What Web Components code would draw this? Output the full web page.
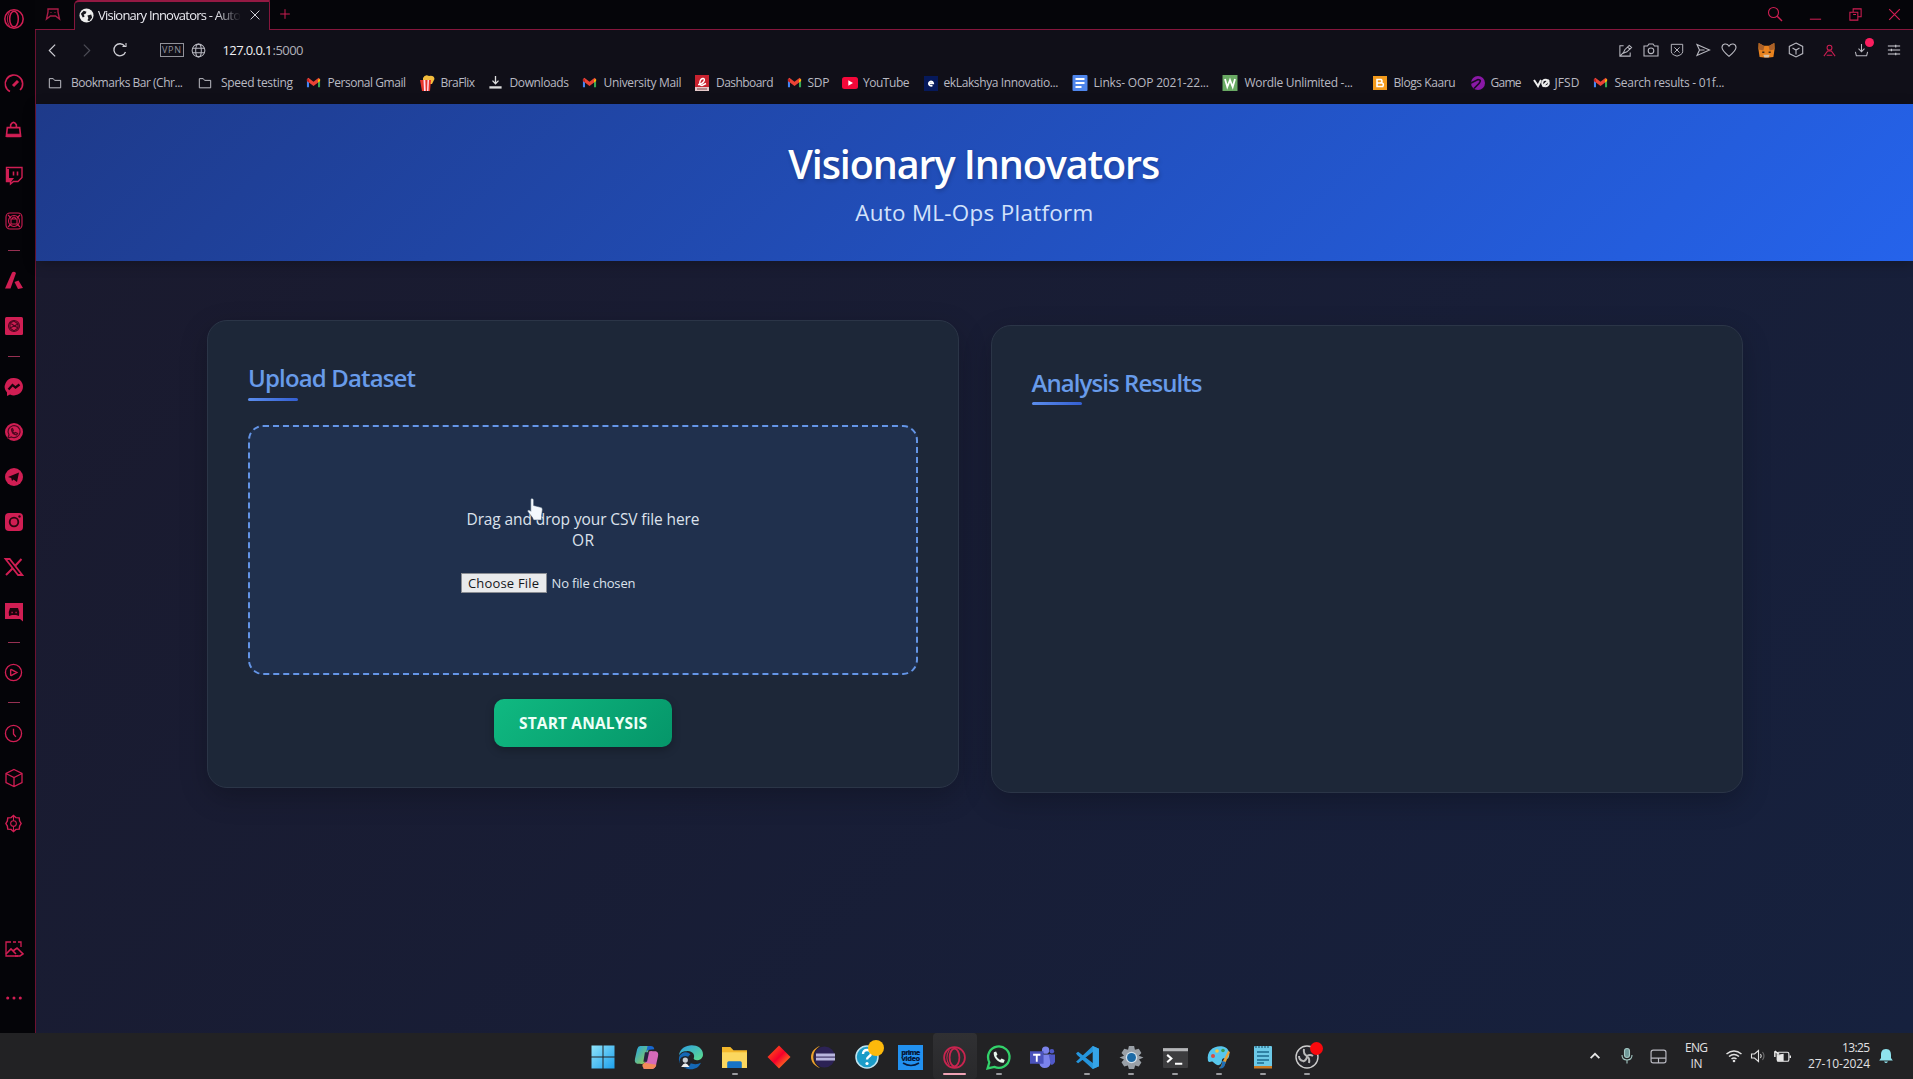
<!DOCTYPE html>
<html lang="en">
<head>
<meta charset="utf-8">
<title>Visionary Innovators - Auto ML-Ops</title>
<style>
html,body{margin:0;height:100%;overflow:hidden;background:#050509;font-family:"Open Sans","Noto Sans",sans-serif}
</style>
</head>
<body>
<desktop-screen></desktop-screen>
<script>
const R = '#d01e53';
const gmail = '<path d="M1 13V4.2l2.2-.4V13z" fill="#4285f4"/><path d="M12.800 13V3.800l2.200.4V13z" fill="#34a853"/><path d="M1 4.500l1.500-1.700L8 7.300l5.500-4.500L15 4.500v2L8 11.600 1 6.500z" fill="#ea4335"/><path d="M12.800 5v3l2.200-1.700V4.200z" fill="#fbbc04"/><path d="M1 4.200v2.200L3.200 8V4.800z" fill="#c5221f"/>';
// Each entry: [viewBox size, markup]. Stroke icons inherit currentColor.
const ICONS = {
  opera:[24,'<circle cx="12" cy="12" r="10" stroke-width="1.700"/><ellipse cx="12" cy="12" rx="4.700" ry="8.500" stroke-width="1.700"/><path d="M7 4.500Q2.500 12 7 19.500" stroke-width="1"/>'],
  pad:[16,'<path d="M3 3h10v3l1.500 7-4-3h-5l-4 3L3 6z" stroke-width="1.400"/><path d="M5.500 6.500h1M9.500 6.500h1"/>'],
  world:[16,'<circle cx="8" cy="8" r="7.500" fill="#eee" stroke="none"/><path d="M2 6l3-3 3 1-1 2-2 1 1 2-2 1zM9 8l4-1 1 3-3 4-2-1 1-2z" fill="#15151c" stroke="none"/>'],
  x:[16,'<path d="M3 3l10 10M13 3L3 13"/>'],
  plus:[16,'<path d="M8 2.500v11M2.500 8h11"/>'],
  back:[16,'<path d="M10.500 2.500L5 8l5.500 5.500"/>'],
  fwd:[16,'<path d="M5.500 2.500L11 8l-5.500 5.500"/>'],
  reload:[16,'<path d="M13.500 10A6 6 0 1 1 12.600 4" stroke-width="1.300"/><path d="M10.500 4.500h3.500V1"/>'],
  globe:[16,'<circle cx="8" cy="8" r="6.800"/><ellipse cx="8" cy="8" rx="3" ry="6.800"/><path d="M1.800 5.500h12.400M1.800 10.500h12.400"/>'],
  search:[16,'<circle cx="6.500" cy="6.500" r="5"/><path d="M10.200 10.200L15 15" stroke-width="1.500"/>'],
  min:[16,'<path d="M2 13h12"/>'],
  restore:[16,'<path d="M2 5.500h8.500V14H2z M5.500 5.500V2H14v8.500h-3.500"/><path d="M5.500 8h3"/>'],
  edit:[16,'<path d="M6 3H2v11h11v-4M5.500 11l1.800-3.800L12 2.500l2.500 2.300-5 4.600zM10 4l3 3M2 14l4-4"/>'],
  camera:[16,'<path d="M1 4h3.500L6 2h4l1.500 2H15v10H1z"/><circle cx="8" cy="8.800" r="2.800"/>'],
  shield:[16,'<path d="M1.500 1.500h13v8.500c0 2.500-3 4-6.500 5-3.500-1-6.500-2.500-6.500-5z M5 5l6 6M11 5l-6 6"/>'],
  send:[16,'<path d="M2 2.500L14.500 8 2 13.500 4.500 8zM4.500 8h5"/>'],
  heart:[16,'<path d="M8 14.300C4 11 1 8.500 1 5.500 1 1.500 6 .8 8 4.200 10 .8 15 1.500 15 5.500c0 3-3 5.500-7 8.800z"/>'],
  fox:[16,'<path d="M.5 1l5 2.500h5l5-2.500.2 5-1.200 8-4 .5h-5l-4-.5L.3 6z" fill="#e8821e" stroke="none"/><path d="M1 1l5 3-1 4-4-1zM15 1l-5 3 1 4 4-1z" fill="#a9602a" stroke="none"/><path d="M5 12h6l-1 2.500H6z" fill="#d8c2a8" stroke="none"/><path d="M4 9h2v1.300H4zM10 9h2v1.300h-2z" fill="#3a2413" stroke="none"/>'],
  cube:[20,'<path d="M10 1.500l8 4v9l-8 4-8-4v-9zM2 5.500l8 4 8-4M10 9.500v9" stroke-width="1.300"/>'],
  cubeIn:[16,'<path d="M8 1l6.700 3.400v7.200L8 15l-6.700-3.400V4.400z"/><path d="M4.500 6L8 8l3.500-2M8 8v4.500"/>'],
  person:[16,'<circle cx="8" cy="5" r="2.600"/><path d="M2 14l4-5.500h4l4 5.500M5 13h6"/>'],
  dl:[16,'<path d="M8 1v8M4.800 6L8 9.300 11.200 6M1.500 9.500l1 4h11l1-4"/>'],
  menu:[16,'<path d="M1 3.500h14M1 8h14M1 12.500h14M10 2v3M5 6.500v3M10 11v3" stroke-width="1.200"/>'],
  folder:[16,'<path d="M1.500 3h4.500l1.500 2h7v8.500h-13z"/>'],
  gmail:[16,'<g stroke="none">'+gmail+'</g>'],
  pop:[16,'<g stroke="none"><path d="M4 3q2-4 6-2 5-1 5.500 3L13 9H4z" fill="#f3bd3d"/><path d="M1 5h11l-1 11H3z" fill="#e63329"/><path d="M4.500 5h1.800l.4 11H5zM8.500 5h1.500l-.6 11H8z" fill="#fde"/></g>'],
  down:[16,'<path d="M8 1v8M4.800 6L8 9.300 11.200 6" stroke="#ddd" stroke-width="1.400"/><path d="M1.500 12h13v2.500h-13z" fill="#ddd" stroke="none"/>'],
  dash:[16,'<path d="M1 0h14v16H1z" fill="#c8222f" stroke="none"/><path d="M4 9.500c6-.5 8-6 5-6S4 10 8 10.500l4-2" stroke="#fff" stroke-width="1.400"/><path d="M1 12h14v4H1z" fill="#e5c9ca" stroke="none"/><path d="M3 14h10" stroke="#8b5157"/>'],
  yt:[16,'<rect y="2" width="16" height="12" rx="2.500" fill="#f5083a" stroke="none"/><path d="M6.300 5.300v5.400L11 8z" fill="#fff" stroke="none"/>'],
  ek:[16,'<rect x="1" y="1" width="14" height="15" fill="#06195b" stroke="none"/><path d="M5.800 8.300h4.400a2.200 2.200 0 1 0-.8 2" stroke="#fff" stroke-width="1.700"/>'],
  doc:[16,'<rect x=".5" width="15" height="16" rx="1" fill="#4f86ec" stroke="none"/><path d="M3.500 4h9M3.500 8h9M3.500 12h6" stroke="#fff" stroke-width="1.800"/>'],
  wordle:[16,'<rect x=".5" width="15" height="16" fill="#6aaa64" stroke="none"/><path d="M3 4l2.300 8L8 5l2.700 7L13 4" stroke="#fff" stroke-width="1.800"/>'],
  blog:[16,'<rect x="1" y="1" width="14" height="14" fill="#f39a1c" stroke="none"/><path d="M5 4.500h4q2 1.500 0 3.200 3.500.3 1.800 3.800H5zM5 8h4" stroke="#fff" stroke-width="1.600"/>'],
  game:[16,'<circle cx="8" cy="8" r="7" fill="#8a18a6" stroke="none"/><path d="M0 8.500l8-4q4 0 1 4l-5 5" stroke="#1b0c24" stroke-width="1.700"/>'],
  vo:[16,'<path d="M0 5l4 6 3-6M15 5L8.500 11.500" stroke="#eee" stroke-width="2"/><circle cx="11.500" cy="8" r="3.300" stroke="#eee" stroke-width="2"/>'],
  gauge:[20,'<path d="M6 17.500A8.700 8.700 0 1 1 16 16" stroke-width="1.600"/><path d="M9 12l5-5" stroke-width="3"/>'],
  bag:[20,'<path d="M3.500 8h13l1 9h-15zM7 8V5q3-5 6 0v3" stroke-width="1.700"/><path d="M3 15h14v2.500H3z" fill="currentColor"/>'],
  twitch:[20,'<path d="M2.500 2.500h15.500v10l-4 4H9.500l-3 2.500v-2.500h-4z" stroke-width="1.400"/><path d="M2 4h3v9h5l-3 4H2z" fill="currentColor" stroke="none"/><path d="M9.500 6.500v4M13.500 6.500v4" stroke-width="1.600"/>'],
  shop:[20,'<rect x="2" y="2" width="16" height="16" rx="4"/><circle cx="10" cy="10" r="5.500"/><path d="M7 13V8h6v5zM8 8q2-4 4 0M4 4l3 3M16 4l-3 3M4 16l3-3M16 16l-3-3"/>'],
  aria:[20,'<path d="M8 1.500q2-1.500 4 .5L6.500 17.500H1z" fill="currentColor" stroke="none"/><path d="M10.500 11l4-1.500L19 17l-5 1z" fill="currentColor" stroke="none"/>'],
  gpt:[20,'<rect x="1" y="1" width="18" height="18" rx="1.500" fill="currentColor" stroke="none"/><g stroke="#4d0720" stroke-width="1.100"><circle cx="10" cy="10" r="5.500"/><path d="M6 7l4-2 4 3v4l-4 3-4-3zM6 7l8 5M14 8l-8 4"/></g>'],
  mess:[20,'<path d="M10 1a9 8.700 0 1 1-4 16.500L3 19v-3.500A8.700 8.700 0 0 1 10 1z" fill="currentColor" stroke="none"/><path d="M4.500 12.500L8.500 8l3 2.500L15.500 7.500" stroke="#18040c" stroke-width="2.200"/>'],
  wa:[20,'<circle cx="10" cy="10" r="9" fill="currentColor" stroke="none"/><g stroke="#4d0720" stroke-width="1.200"><path d="M4 16l1-3.200A6 6 0 1 1 7.500 15z"/><path d="M7.500 7q0 5 5 6l1-1.500-2-1-1 .8q-1.500-.8-2-2l.8-1L8.500 6.500z"/></g>'],
  tg:[20,'<circle cx="10" cy="10" r="9" fill="currentColor" stroke="none"/><path d="M4 10l11-4.500-2 9.500-3.500-2.500-1.500 1.500-.8-3z" fill="#18040c" stroke="none"/>'],
  ig:[20,'<rect x="1" y="1" width="18" height="18" rx="4" fill="currentColor" stroke="none"/><circle cx="10" cy="10" r="4.300" stroke="#27050f" stroke-width="1.800"/><circle cx="15.500" cy="4.500" r="1.200" fill="#27050f" stroke="none"/>'],
  tw:[20,'<path d="M1.500 2h4.200l12.600 16h-4.200z" stroke-width="1.800"/><path d="M17.500 2L11 9M8.500 11.500L2 18" stroke-width="2"/>'],
  disc:[20,'<path d="M1 1h18v18.500l-3-2.500H1z" fill="currentColor" stroke="none"/><path d="M5 14q-1-4 1-8h8q2 4 1 8l-3-1H8z" fill="#18040c" stroke="none"/><path d="M7.500 10.500h1.200M11.500 10.500h1.200" stroke-width="1.600"/>'],
  play:[20,'<circle cx="10" cy="10" r="8.500" stroke-width="1.400"/><path d="M7 7.500q0-1 1-.5l5.500 3-5.500 3q-1 .5-1-.5z" stroke-width="1.500"/>'],
  clock:[20,'<circle cx="10" cy="10" r="8.500" stroke-width="1.400"/><path d="M10 5v5.500l2.500 3" stroke-width="1.400"/>'],
  gear:[20,'<path d="M10 1.500l2.500 2.300 3.500.3.500 3.400L18 10l-1.500 2.500-.5 3.400-3.500.3L10 18.500l-2.500-2.300-3.500-.3-.5-3.400L2 10l1.500-2.500.5-3.400 3.500-.3z" stroke-width="1.500"/><circle cx="10" cy="10" r="3"/><path d="M10 2v5M10 13v5"/>'],
  pic:[20,'<path d="M2 10V3h5M9 3h3M14 3h3v5M2 10v7h12" stroke-width="1.300"/><path d="M2 15l5-5 5 5M9 12l4-3 6 6-3 2h-5" stroke-width="1.600"/>'],
  dots:[20,'<circle cx="3" cy="10" r="1.700" fill="currentColor" stroke="none"/><circle cx="10" cy="10" r="1.700" fill="currentColor" stroke="none"/><circle cx="17" cy="10" r="1.700" fill="currentColor" stroke="none"/>'],
  win:[24,'<path d="M.5.500h11v11H.500zM12.500.500h11v11h-11zM.500 12.500h11v11H.500zM12.500 12.500h11v11h-11z" fill="url(#g)" stroke="none"/>',['#8fe4fb','#1da0ec']],
  copilot:[24,'<g stroke="none"><path d="M6 1h9l-4 14q-1 4-5 3H3q-3-1-2-5L3 4q1-3 3-3z" fill="url(#g)"/><path d="M13 1h3q3 0 3.500 3l-5 .5q-2 0-3 3z" fill="#1767cf"/><path d="M18 23H9l4-14q1-4 5-3h3q3 1 2 5l-2 9q-1 3-3 3z" fill="#d56ab8"/><path d="M10 17l-2 2q0 4 4 4h6q3-1 3.500-4z" fill="#f28a58"/><path d="M10.500 7h4l-2 9H9z" fill="#26233f"/></g>',['#1ea5e8','#a3cf3c']],
  edge:[24,'<g stroke="none"><path d="M1 10C2-3 24-3 24 9c0 6-8 7-9 4 2-4-2-8-7-7-4 0-6 2-7 4z" fill="url(#g)"/><path d="M1 12c1-5 8-7 11-3-4 2-4 8 2 9 3 1 6 0 8-1-2 5-7 7-12 6C4 22 0 17 1 12z" fill="#1568b5"/><circle cx="7" cy="16" r="5.500" fill="#20242b"/><circle cx="7" cy="14.500" r="2.500" fill="#c9cfd4"/><path d="M3 21q4-7 8 0z" fill="#eee"/></g>',['#2c9ce4','#5ee08a']],
  files:[24,'<g stroke="none"><path d="M0 2h8l3 3h13v17H0z" fill="#f3b72b"/><path d="M0 7h24v15H0z" fill="#fbd75f"/><path d="M5 22v-5q0-1.500 1.500-1.500h11q1.500 0 1.500 1.500v5z" fill="#1673c5"/></g>'],
  diamond:[24,'<path d="M12 .5L23.500 12 12 23.500.5 12z" fill="url(#g)" stroke="none"/>',['#ff6a12','#f5002b','#ffab1a']],
  eclipse:[24,'<g stroke="none"><circle cx="13.500" cy="12" r="10.500" fill="#2c2255"/><path d="M9 1C-3 5-3 19 9 23 0 18 0 6 9 1z" fill="#eda12e"/><path d="M5 8.500h19v7H5z" fill="#b8b6dd"/><path d="M5 11.500h19v1.200H5z" fill="#403566"/></g>'],
  help:[24,'<circle cx="12" cy="12" r="11" fill="#1b9cc8" stroke="#bfe4f0" stroke-width="1.500"/><path d="M8 9q0-4 4-4t4 3.500c0 3-4 3-4 6" stroke="#fff" stroke-width="2.400"/><circle cx="12" cy="18.500" r="1.600" fill="#fff" stroke="none"/>'],
  wapp:[24,'<path d="M1.500 22.500l1.700-6A10.300 10.300 0 1 1 8 21z" stroke="#32d26a" stroke-width="2.200"/><path d="M7.500 7c-1 5 5 11 9.500 10l1-2.500-3-1.500-1.500 1.300Q11 13 9.800 10.500L11 9 9.700 6.300z" fill="#e7f7ec" stroke="none"/>'],
  teams:[24,'<g stroke="none"><circle cx="15" cy="5" r="3.500" fill="#7b83eb"/><circle cx="21" cy="6" r="2.200" fill="#5059c9"/><path d="M9 9h11v8q-1 5-6 5-4 0-5-4z" fill="#7b83eb"/><path d="M18 9h6v7q-1 3-4 3z" fill="#5059c9"/><path d="M0 6h13v12H0z" fill="#4b53bc"/><path d="M3 8.500h7v1.700H7.400V16H5.600v-5.800H3z" fill="#fff"/></g>'],
  code:[24,'<path d="M17 1l6 2.500v17L17 23 2 9.500 1 8l2-1.500L18 18V6L3 17.500 1 16z" fill="#2595dc" stroke="none"/><path d="M17 1l6 2.500v17L17 23z" fill="#35a4e8" stroke="none"/>'],
  cog:[24,'<path d="M9.500 1h5l.8 3.500 3.700-1 2.500 4.200-2.500 2.600L23.500 12l-4.300 2 2.300 2.700-2.500 4-3.500-1L14.500 23h-5l-1-3.400-3.500 1-2.600-4 2.400-2.600L.5 12l4.300-1.700-2.400-2.600L5 3.500l3.700 1z" fill="#9aa0a7" stroke="none"/><circle cx="12" cy="12" r="5.500" fill="#d3e0ea" stroke="none"/><circle cx="12" cy="12" r="4.300" fill="#1c6aa6" stroke="none"/>'],
  term:[24,'<rect y="3" width="24" height="19" rx="1" fill="#3d3d3f" stroke="none"/><path d="M0 3h24v3H0z" fill="#b5b6b8" stroke="none"/><path d="M4 9.500l4 3.500-4 3.500M11.500 18h7" stroke="#fff" stroke-width="2"/>'],
  paint:[24,'<path d="M1 16C-1 5 8 0 16 1.500c6 1 8 8 5 12-2 1-3-1-5 0s0 4-3 6-5-1-7-2.500-3 1.500-5-1z" fill="#58c7ec" stroke="none"/><circle cx="6" cy="11" r="2" fill="#d94f44" stroke="none"/><circle cx="10" cy="6" r="1.800" fill="#f5c943" stroke="none"/><circle cx="16" cy="5.500" r="1.800" fill="#3d9b52" stroke="none"/><path d="M21 6l2 1-5 12q-1 4-6 4 3-2 3-5z" fill="#e7a33a" stroke="none"/><path d="M15 16l4 1-2 5q-2 2-5 1.500 3-2 3-5z" fill="#1f6fb6" stroke="none"/>'],
  note:[24,'<rect x="3" y="1" width="18" height="22" rx="1" fill="#6cc9e7" stroke="none"/><path d="M3 21h18v2.500H3z" fill="#c97822" stroke="none"/><path d="M6 7h12M6 11h12M6 15h12M6 18h7" stroke="#1b6a8f" stroke-width="1.300"/><path d="M5 1v2M8 1v2M11 1v2M14 1v2M17 1v2" stroke="#205a75"/>'],
  obs:[24,'<circle cx="12" cy="12" r="11" fill="#25252a" stroke="#ccc" stroke-width="1.400"/><g stroke="#bbb" stroke-width="2"><path d="M9 4q-1 5 3 7 3-2 6 0M12 11q0 4-4 5.500M12 11q3 2 2 7M8 16q-4-1-4-5"/></g>'],
  chev:[16,'<path d="M3 10.500l5-5 5 5" stroke-width="2"/>'],
  mic:[16,'<rect x="5.500" y=".5" width="5" height="9" rx="2.500" fill="#6f9999"/><path d="M3 7q0 5 5 5t5-5M8 12v3.500"/>'],
  touch:[16,'<rect x="1" y="2" width="14" height="12" rx="2"/><path d="M1 9.500h14M8 9.500V14"/>'],
  wifi:[16,'<path d="M.5 6q7.500-6 15 0M3 8.500q5-4 10 0M5.500 11q2.500-2 5 0" stroke-width="1.600"/><circle cx="8" cy="13" r="1.300" fill="currentColor" stroke="none"/>'],
  spk:[16,'<path d="M1.500 6h3L8.500 2.500v11L4.500 10h-3zM10.500 6q1.500 2 0 4"/><path d="M12.500 4q3 4 0 8" opacity=".4"/>'],
  batt:[16,'<rect x="3" y="4" width="11" height="8.500" rx="1.500"/><path d="M3.500 7l5-1v6h-5z" fill="currentColor"/><path d="M15.300 7v2.500M.8 3v5.500M.8 3l4 3" stroke-width="1.400"/>'],
  bell:[16,'<path d="M8 1c4 0 5 3 5 6v3l1.800 2.500H1.200L3 10V7c0-3 1-6 5-6zM6 13.500h4q-2 3-4 0z" fill="#8fe3ee" stroke="none"/>'],
  hand:[24,'<path d="M8 1.500c1.400 0 1.600 1 1.600 2v5l7 1.800c1.500.5 2 1.500 1.700 3L17.500 19v4H9.500l-1-2.500L4 15c-1-1.500.5-2.500 2-1.500l.8.8V3.200c0-1 .2-1.700 1.200-1.700z" fill="#f4f8fc" stroke="#3b5068" stroke-width=".5"/>']
};

const define = (name, css, html, after) => customElements.define(name, class extends HTMLElement {
  connectedCallback() {
    if (this.shadowRoot) return;
    const root = this.attachShadow({mode: 'open'});
    root.innerHTML = `<style>:host{display:block;box-sizing:border-box}*{box-sizing:border-box}${css}</style>` + (typeof html === 'function' ? html(this) : html);
    if (after) after(this, root);
  }
});

// Inline glyph from the icon table; attributes: n (name), s (size), c (colour)
define('ui-icon', ':host{flex:none;line-height:0}svg{display:block;overflow:visible}', el => {
  const [vb, body, grad] = ICONS[el.getAttribute('n')], s = el.getAttribute('s') || 16;
  const g = grad ? `<defs><linearGradient id="g" x1="0" y1="0" x2="1" y2="1">${grad.map((c, i) => `<stop offset="${i / (grad.length - 1)}" stop-color="${c}"/>`).join('')}</linearGradient></defs>` : '';
  return `<svg width="${s}" height="${s}" viewBox="0 0 ${vb} ${vb}" fill="none" stroke="currentColor" stroke-width="1.100" color="${el.getAttribute('c') || '#c4c4cb'}">${g}${body}</svg>`;
});

// One text line tracked so that it fills the given width w at font size s
define('fit-text', ':host{white-space:nowrap;flex:none}span{display:inline-block}', '<span><slot></slot></span>', (el, root) => {
  const w = +el.getAttribute('w');
  el.style.width = w + 'px';
  el.style.fontSize = (el.getAttribute('s') || 12) + 'px';
  const sp = root.querySelector('span');
  sp.style.letterSpacing = ((w - sp.getBoundingClientRect().width) / (el.textContent.length - 1)).toFixed(3) + 'px';
});

// Fixed-width slot that centres one glyph
define('icon-cell', ':host{display:flex;align-items:center;justify-content:center;flex:none}ui-icon{flex:none}', el =>
  `<ui-icon n="${el.getAttribute('n')}" s="${el.getAttribute('s') || 16}" c="${el.getAttribute('c') || '#b9b9c1'}"></ui-icon><slot></slot>`,
  el => { el.style.width = el.getAttribute('w') + 'px'; });

// icon, row height, icon size; '-' is a divider and '' an empty gap
const side = [['opera',38,22],['',24],['gauge',44,20],['bag',46,19],['twitch',45,20],['shop',48,20],['-',10],['aria',51,20],['gpt',40,20],['-',20],['mess',42,20],['wa',47,20],['tg',43,20],['ig',47,20],['tw',43,20],['disc',47,20],['-',15],['play',45,19],['-',15],['clock',47,19],['cube',41,20],['gear',51,19]];
define('side-bar', `:host{width:35.500px;background:#040408;border-right:1.500px solid #6d1231;padding-right:7px;display:flex;flex-direction:column}
 .i{display:flex;align-items:center;justify-content:center;flex:none}.l{width:12px;height:1px;background:#973052}.g{flex:1}`,
 side.map(([n, h, s]) => `<div class="i" style="height:${h}px">${n === '-' ? '<div class="l"></div>' : n ? `<ui-icon n="${n}" s="${s}" c="${R}"></ui-icon>` : ''}</div>`).join('') +
 `<div class="g"></div><div class="i" style="height:44px"><ui-icon n="pic" s="20" c="${R}"></ui-icon></div><div class="i" style="height:54px"><ui-icon n="dots" s="18" c="${R}"></ui-icon></div><div style="height:8px"></div>`);

define('tab-strip', `:host{height:30px;display:flex;background:#050509;margin-left:-1px}
 .b{border-bottom:1.500px solid #85163c;display:flex;align-items:center;padding-bottom:1px}
 .tab{width:196px;border:1.500px solid #85163c;border-top:2px solid #941943;border-bottom:0;border-radius:5px 0 0 0;background:#100f18;display:flex;align-items:center;padding:0 0 2px 4px;color:#eaeaf0}
 fit-text{margin-left:4px;-webkit-mask:linear-gradient(90deg,#000 82%,transparent);mask:linear-gradient(90deg,#000 82%,transparent)}
 .f{flex:1;justify-content:flex-end}`,
 `<div class="b" style="width:39.500px"><icon-cell n="pad" w="36" s="16" c="#a81c46"></icon-cell></div>
 <div class="tab"><ui-icon n="world" s="15"></ui-icon><fit-text w="143" s="13">Visionary Innovators - Auto</fit-text><icon-cell n="x" w="27" s="14" c="#d8d8dd"></icon-cell></div>
 <div class="b f"><icon-cell n="plus" w="29" s="14" c="${R}"></icon-cell><div style="flex:1"></div>
 <icon-cell n="search" w="40" c="${R}"></icon-cell><icon-cell n="min" w="40" s="15" c="${R}"></icon-cell><icon-cell n="restore" w="40" s="15" c="${R}"></icon-cell><icon-cell n="x" w="38" s="17" c="${R}"></icon-cell></div>`);

define('address-bar', `:host{height:40px;display:flex;align-items:center}
 .vpn{width:24px;height:14px;border:1px solid #92929a;color:#92929a;display:flex;align-items:center;justify-content:center;margin-left:24px;line-height:12px}
 .url{display:flex;color:#efeff3;margin-left:10px}.p{color:#b0b0b9}
 .dot{position:absolute;width:9px;height:9px;border-radius:50%;background:#fb1e5f;margin:-16px 0 0 17px}`,
 `<icon-cell n="back" w="34" s="17" c="#d0d0d6"></icon-cell><icon-cell n="fwd" w="34" s="17" c="#4c4c56"></icon-cell><icon-cell n="reload" w="32" s="16" c="#d0d0d6"></icon-cell>
 <div class="vpn"><fit-text w="19" s="9">VPN</fit-text></div><icon-cell n="globe" w="29" s="15"></icon-cell>
 <div class="url"><fit-text w="50" s="13">127.0.0.1</fit-text><fit-text class="p" w="31" s="13">:5000</fit-text></div><div style="flex:1"></div>
 <icon-cell n="edit" w="26" s="15"></icon-cell><icon-cell n="camera" w="26" s="16"></icon-cell><icon-cell n="shield" w="26" s="14"></icon-cell><icon-cell n="send" w="26" s="16"></icon-cell><icon-cell n="heart" w="26" s="16"></icon-cell><div style="width:9px"></div>
 <icon-cell n="fox" w="30" s="17"></icon-cell><icon-cell n="cubeIn" w="30" s="16"></icon-cell><icon-cell n="person" w="36" s="15" c="${R}"></icon-cell><icon-cell n="dl" w="28" s="15"><i class="dot" style="position:absolute;width:9px;height:9px;border-radius:50%;background:#fb1e5f;margin:-16px 0 0 17px"></i></icon-cell><icon-cell n="menu" w="38" s="14" c="#d0d0d6"></icon-cell>`);

// icon, icon x, icon size, label x, label width, label
const marks = [['folder',48,14,71.5,112,'Bookmarks Bar (Chr...'],['folder',198,14,221.5,72,'Speed testing'],['gmail',306.5,15,328,78.500,'Personal Gmail'],['pop',419,16,441,34.500,'BraFlix'],['down',488.500,15,510,59.500,'Downloads'],['gmail',582.500,15,604,78,'University Mail'],['dash',694,16,716.500,57.500,'Dashboard'],['gmail',787,15,808,22,'SDP'],['yt',842,16,863.500,46.500,'YouTube'],['ek',923,16,944,115,'ekLakshya Innovatio...'],['doc',1072,16,1094,115.500,'Links- OOP 2021-22...'],['wordle',1222,16,1245,108.500,'Wordle Unlimited -...'],['blog',1372,16,1394,62,'Blogs Kaaru'],['game',1470,16,1491,31,'Game'],['vo',1534,16,1555,25,'JFSD'],['gmail',1593.500,15,1615,110,'Search results - 01f...']];
define('bookmark-item', ':host{display:flex;align-items:center;flex:none}', el => {
  const [n, x, s, tx, w, t] = marks[el.getAttribute('i')];
  return `<ui-icon n="${n}" s="${s}"></ui-icon><fit-text style="margin-left:${tx - x - s}px" w="${w}">${t}</fit-text>`;
}, el => { const i = +el.getAttribute('i'); el.style.width = ((marks[i + 1] || [0, 1760])[1] - marks[i][1]) + 'px'; });
define('bookmarks-bar', ':host{height:33.500px;display:flex;align-items:center;padding:0 0 8.500px 12px;color:#b9b9c2}', marks.map((m, i) => `<bookmark-item i="${i}"></bookmark-item>`).join(''));

define('page-header', `:host{height:157px;background:linear-gradient(135deg,#1e3a8a,#2563eb);display:flex;flex-direction:column;align-items:center;padding-top:36.500px;color:#fff;box-shadow:0 3px 12px #0004}
 .t{font-weight:600;line-height:48px;text-shadow:1px 2px 4px #0003}.s{line-height:26px;margin-top:12px;color:#d3e2fb}`,
 '<fit-text class="t" w="372" s="39.500">Visionary Innovators</fit-text><fit-text class="s" w="238" s="22.400">Auto ML-Ops Platform</fit-text>');

define('panel-card', `:host{width:752px;height:468px;background:#1d2738;border:1px solid #2b3547;border-radius:20px;padding:41px 39px 0 40px;box-shadow:0 9px 28px #00000038}
 fit-text{line-height:32px;font-weight:600;color:#689bea}.u{width:50px;height:3px;border-radius:2px;background:linear-gradient(90deg,#5b8dec,#345fd2);margin:3.500px 0 24px}`,
 el => `<fit-text w="${el.getAttribute('w')}" s="24">${el.getAttribute('title-text')}</fit-text><div class="u"></div><slot></slot>`);

define('drop-zone', `:host{height:250.500px;width:670px;border:2px dashed #6495e6;border-radius:15px;background:#20304d;padding-top:82px;color:#dce2ec}
 .c{display:flex;flex-direction:column;align-items:center;line-height:21px}
 .f{display:flex;align-items:center;height:20px;margin:22.500px 0 0 210.500px}
 .b{width:86px;height:20px;background:#e9eaec;border:1px solid #8a8d93;color:#15171b;display:flex;align-items:center;justify-content:center;margin-right:5px;line-height:18px}
 .k{position:absolute;left:524px;top:497px}`,
 `<div class="c"><fit-text w="233" s="15.500">Drag and drop your CSV file here</fit-text><fit-text w="22" s="15.500">OR</fit-text></div>
 <div class="f"><div class="b"><fit-text w="71" s="13">Choose File</fit-text></div><fit-text w="84" s="13">No file chosen</fit-text></div><ui-icon class="k" n="hand" s="24"></ui-icon>`);

define('start-button', `:host{width:178px;height:47.500px;margin:24px auto 0 246px;border-radius:10px;background:linear-gradient(135deg,#10b981,#059669);display:flex;align-items:center;justify-content:center;color:#effff8;font-weight:700;box-shadow:0 3px 9px #0004}`,
 '<fit-text w="128" s="15.500">START ANALYSIS</fit-text>');

define('page-body', `:host{flex:1;background:linear-gradient(135deg,#1a1a2e,#16213e);display:flex;gap:31.500px;align-items:flex-start;padding:59.500px 0 0 171.500px}panel-card{flex:none}.r{margin-top:4.500px}`,
 '<panel-card w="168" title-text="Upload Dataset"><drop-zone></drop-zone><start-button></start-button></panel-card><panel-card class="r" w="171" title-text="Analysis Results"></panel-card>');

const apps = [['win',24],['copilot',25],['edge',25],['files',25,1],['diamond',24],['eclipse',24],['help',24],['prime',24],['opera',25,2],['wapp',25,1],['teams',25],['code',25,1],['cog',25,1],['term',25,1],['paint',24,1],['note',24,1],['obs',24,1]];
define('app-slot', `:host{width:44.060px;height:46px;display:flex;flex-direction:column;align-items:center;padding-top:12px;position:relative}
 :host([i="8"]){background:linear-gradient(#303033,#29292b);border-radius:4px}
 .p{width:25px;height:25px;background:#2291f0;color:#071a3b;display:flex;flex-direction:column;align-items:center;justify-content:center;font-weight:800;line-height:6.500px}
 .d{position:absolute;bottom:4px;height:2.500px;width:6px;border-radius:2px;background:#9a9a9e}.w{width:23px;background:#f0a3b5}
 .n{position:absolute;border-radius:50%}`,
 el => {
  const i = +el.getAttribute('i'), [n, s, d] = apps[i];
  return (n === 'prime' ? '<div class="p"><fit-text w="19" s="7.500">prime</fit-text><fit-text w="19" s="7.500">video</fit-text><svg width="18" height="5" fill="none" stroke="#071a3b" stroke-width="1.500"><path d="M1 1q8 5 16 0"/></svg></div>' : `<ui-icon n="${n}" s="${s}" c="#c9244f"></ui-icon>`) +
   (d ? `<div class="d ${d > 1 ? 'w' : ''}"></div>` : '') +
   (n === 'help' ? '<div class="n" style="width:16px;height:16px;background:#fdb90b;left:23px;top:7px"></div>' : '') +
   (n === 'obs' ? '<div class="n" style="width:13px;height:13px;background:#f9090d;left:25px;top:9px"></div>' : '');
 });

define('task-bar', `:host{height:46px;background:#222224;display:flex;align-items:center;padding-left:580.500px;color:#e1e1e3}
 .r{display:flex;align-items:center;flex:1;justify-content:flex-end;padding-right:12px}
 .c{display:flex;flex-direction:column;line-height:16.300px}.l{align-items:center;width:45px}.t{align-items:flex-end;width:72px}`,
 apps.map((a, i) => `<app-slot i="${i}"></app-slot>`).join('') +
 `<div class="r"><icon-cell n="chev" w="32" s="14" c="#e8e8e8"></icon-cell><icon-cell n="mic" w="32" s="16" c="#a5c8c4"></icon-cell><icon-cell n="touch" w="31" s="17"></icon-cell>
 <div class="c l"><fit-text w="23">ENG</fit-text><fit-text w="12">IN</fit-text></div>
 <icon-cell n="wifi" w="30" s="16" c="#e0e0e0"></icon-cell><icon-cell n="spk" w="17" s="16" c="#e0e0e0"></icon-cell><icon-cell n="batt" w="32" s="17" c="#e8e8e8"></icon-cell>
 <div class="c t"><fit-text w="28">13:25</fit-text><fit-text w="62">27-10-2024</fit-text></div><icon-cell n="bell" w="31" s="16"></icon-cell></div>`);

define('desktop-screen', `:host{width:1913px;height:1079px;display:flex;flex-direction:column;overflow:hidden}
 .w{height:1033px;display:flex}.m{flex:1;display:flex;flex-direction:column;background:#100f18;min-width:0}page-header{position:relative;flex:none}`,
 '<div class="w"><side-bar></side-bar><div class="m"><tab-strip></tab-strip><address-bar></address-bar><bookmarks-bar></bookmarks-bar><page-header></page-header><page-body></page-body></div></div><task-bar></task-bar>');
</script>
</body>
</html>
